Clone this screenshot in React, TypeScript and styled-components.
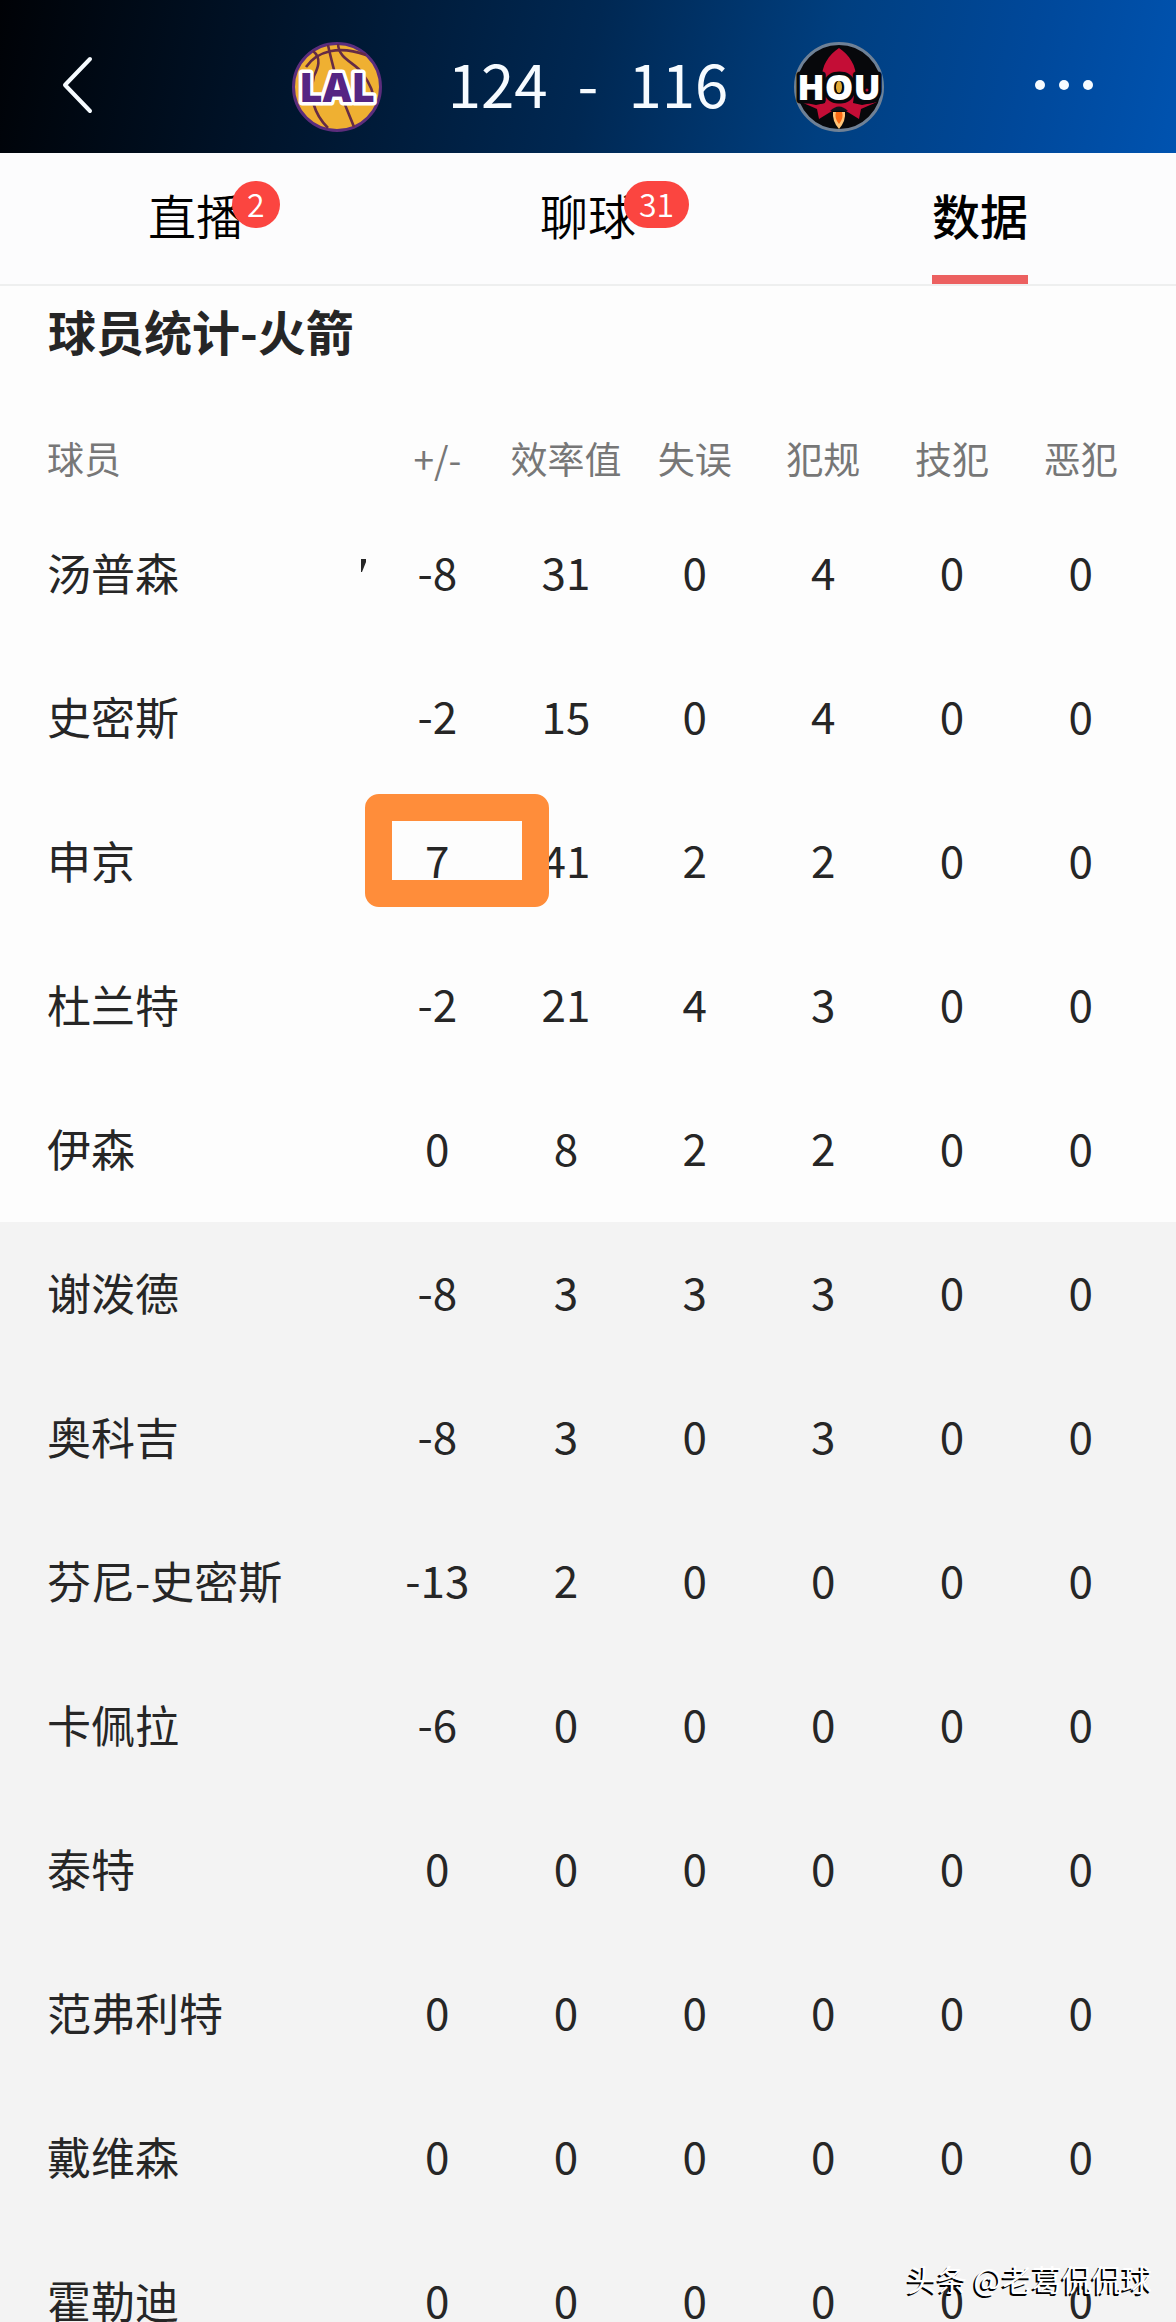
import React from "react";
import styled, { createGlobalStyle } from "styled-components";

const GlobalStyle = createGlobalStyle`
  * { box-sizing: border-box; }
  body {
    margin: 0;
    font-family: "Noto Sans CJK SC", "Noto Sans", sans-serif;
    color: #262626;
    background: #f3f3f3;
  }
`;

const Page = styled.div`
  position: relative;
  display: flex;
  flex-direction: column;
  height: 100vh;
  overflow: hidden;
`;

const Header = styled.header`
  flex: none;
  display: grid;
  grid-template-columns: 1fr 592px 1fr;
  align-items: center;
  height: 153px;
  padding: 20px 48px 0;
  color: #f6fbff;
  background: linear-gradient(102deg, #000206 0%, #00142b 24%, #002853 50%, #003f80 70%, #00489a 86%, #0053b0 100%);
`;

const IconButton = styled.button<{ $end?: boolean }>`
  display: flex;
  justify-self: ${(p) => (p.$end ? "end" : "start")};
  padding: 8px 8px 12px;
  border: 0;
  color: inherit;
  background: none;
  cursor: pointer;
`;

const Matchup = styled.div`
  display: flex;
  align-items: center;
  justify-content: space-between;
`;

const Score = styled.div`
  display: flex;
  gap: 30px;
  padding-bottom: 10px;
  font-size: 60px;
  line-height: 64px;
`;

const Tabs = styled.nav`
  flex: none;
  display: grid;
  grid-template-columns: repeat(3, 1fr);
  justify-items: center;
  height: 133px;
  border-bottom: 2px solid #eeefef;
  background: #fcfcfd;
`;

const Tab = styled.button<{ $active?: boolean }>`
  position: relative;
  padding: 0;
  border: 0;
  border-bottom: 9px solid ${(p) => (p.$active ? "#ec6060" : "transparent")};
  font-family: inherit;
  font-size: 48px;
  line-height: 64px;
  font-weight: ${(p) => (p.$active ? 500 : 350)};
  color: #000;
  background: none;
  cursor: pointer;
`;

const Badge = styled.span`
  position: absolute;
  top: 28px;
  left: calc(50% + 36px);
  min-width: 47px;
  padding: 0 15px;
  border-radius: 24px;
  font-size: 32px;
  line-height: 45px;
  padding-bottom: 2px;
  font-weight: 350;
  color: #fff;
  background: #fb4540;
`;

const Content = styled.main`
  flex: 1;
  min-height: 0;
  overflow: hidden;
  background: #f3f3f3;
`;

const Title = styled.h2`
  margin: 0;
  padding: 0 48px 43px;
  font-size: 48px;
  line-height: 88px;
  font-weight: 700;
  background: #fdfdfd;
`;

const Table = styled.table`
  display: block;
  thead, tbody { display: block; }
`;

const Row = styled.tr<{ $bench?: boolean }>`
  display: grid;
  grid-template-columns: 341px repeat(6, 1fr);
  align-items: center;
  height: 144px;
  padding: 0 31px 4px 32px;
  background: ${(p) => (p.$bench ? "#f3f3f3" : "#fdfdfd")};
`;

const HeadRow = styled(Row)`
  height: 85px;
`;

const HeadCell = styled.th<{ $name?: boolean }>`
  padding: ${(p) => (p.$name ? "0 15px" : "0")};
  font-size: 37px;
  line-height: 48px;
  font-weight: 400;
  text-align: ${(p) => (p.$name ? "left" : "center")};
  white-space: nowrap;
  color: #777;
`;

const NameCell = styled.th`
  position: relative;
  padding: 0 15px;
  font-size: 44px;
  line-height: 64px;
  font-weight: 400;
  text-align: left;
  white-space: nowrap;
`;

const Stat = styled.td`
  position: relative;
  padding: 0 0 2px;
  font-size: 44px;
  line-height: 64px;
  text-align: center;
`;

const Highlight = styled.span`
  position: absolute;
  z-index: 1;
  top: -33px;
  left: -8px;
  width: 184px;
  height: 113px;
  border: 27px solid #ff8d3a;
  border-radius: 14px;
`;

const Stray = styled.svg`
  position: absolute;
  top: 19px;
  right: 7px;
`;

const Watermark = styled.div`
  position: absolute;
  z-index: 2;
  right: 24px;
  bottom: 24px;
  font-size: 30px;
  line-height: 40px;
  color: #fff;
  text-shadow: -2px 2px 0 #000;
`;

const columns = ["+/-", "效率值", "失误", "犯规", "技犯", "恶犯"];

type Player = { name: string; stats: number[]; marked?: boolean; stray?: boolean };

const starters: Player[] = [
  { name: "汤普森", stats: [-8, 31, 0, 4, 0, 0], stray: true },
  { name: "史密斯", stats: [-2, 15, 0, 4, 0, 0] },
  { name: "申京", stats: [7, 41, 2, 2, 0, 0], marked: true },
  { name: "杜兰特", stats: [-2, 21, 4, 3, 0, 0] },
  { name: "伊森", stats: [0, 8, 2, 2, 0, 0] },
];

const bench: Player[] = [
  { name: "谢泼德", stats: [-8, 3, 3, 3, 0, 0] },
  { name: "奥科吉", stats: [-8, 3, 0, 3, 0, 0] },
  { name: "芬尼-史密斯", stats: [-13, 2, 0, 0, 0, 0] },
  { name: "卡佩拉", stats: [-6, 0, 0, 0, 0, 0] },
  { name: "泰特", stats: [0, 0, 0, 0, 0, 0] },
  { name: "范弗利特", stats: [0, 0, 0, 0, 0, 0] },
  { name: "戴维森", stats: [0, 0, 0, 0, 0, 0] },
  { name: "霍勒迪", stats: [0, 0, 0, 0, 0, 0] },
];

const logoText = {
  textAnchor: "middle" as const,
  fontFamily: '"Open Sans", "Noto Sans", sans-serif',
  fontWeight: 800,
  strokeLinejoin: "round" as const,
  paintOrder: "stroke" as const,
};

function LakersLogo() {
  return (
    <svg width="90" height="90" viewBox="0 0 90 90" overflow="visible" role="img" aria-label="LAL">
      <circle cx="45" cy="45" r="43.5" fill="#efb032" stroke="#5b2d7c" strokeWidth="3" />
      <g fill="none" stroke="#652b45" strokeWidth="2.6">
        <path d="M14 25C25 9 47 3 74 13" />
        <path d="M21 9C30 16 26 26 22 34C17 54 22 72 36 86" />
        <path d="M36 3C39 17 42 27 45 40C50 57 57 72 62 85" />
        <path d="M46 2C47 18 63 20 71 32C78 42 82 50 82 59" />
      </g>
      <text x="45" y="60" fontSize="40" fill="#552583" stroke="#fff" strokeWidth="7" {...logoText}>LAL</text>
    </svg>
  );
}

function RocketsLogo() {
  return (
    <svg width="90" height="90" viewBox="0 0 90 90" overflow="visible" role="img" aria-label="HOU">
      <circle cx="45" cy="45" r="43.5" fill="#07080b" stroke="#6f8196" strokeWidth="3" />
      <path d="M45 6C35 13 27 23 28 39L31 61L22 63L7 60L23 67L25 77L38 69H52L65 77L67 67L83 60L68 63L59 61L62 39C63 23 55 13 45 6Z" fill="#c40d36" />
      <path d="M36 69Q45 60 54 69Z" fill="#10131b" />
      <path d="M39 70H51Q52 79 45 87Q38 79 39 70Z" fill="#ffc477" />
      <path d="M42 70H48Q50 76 45 82Q40 76 42 70Z" fill="#fa6a14" />
      <text x="45" y="58" fontSize="36" fill="#fff" stroke="#07080b" strokeWidth="7" {...logoText}>HOU</text>
      <ellipse cx="45" cy="45" rx="3" ry="6" fill="#e2aa35" />
      <circle cx="73" cy="48" r="1.5" fill="#c40d36" />
    </svg>
  );
}

function PlayerRow({ player, isBench }: { player: Player; isBench?: boolean }) {
  return (
    <Row $bench={isBench}>
      <NameCell scope="row">
        {player.name}
        {player.stray && (
          <Stray width="5" height="13" viewBox="0 0 5 13" aria-hidden="true">
            <path d="M0 0H5V3L1 13H0Z" fill="#262626" />
          </Stray>
        )}
      </NameCell>
      {player.stats.map((value, i) => (
        <Stat key={columns[i]}>
          {value}
          {player.marked && i === 0 && <Highlight />}
        </Stat>
      ))}
    </Row>
  );
}

export default function App() {
  return (
    <Page>
      <GlobalStyle />
      <Header>
        <IconButton aria-label="返回">
          <svg width="42" height="58" viewBox="0 0 42 58" fill="none" stroke="currentColor" strokeWidth="4" strokeLinecap="round" strokeLinejoin="round">
            <path d="M34 3L9 29L34 55" />
          </svg>
        </IconButton>
        <Matchup>
          <LakersLogo />
          <Score>
            <span>124</span>
            <span>-</span>
            <span>116</span>
          </Score>
          <RocketsLogo />
        </Matchup>
        <IconButton $end aria-label="更多">
          <svg width="88" height="12" viewBox="0 0 88 12" fill="currentColor">
            <circle cx="8" cy="6" r="5" />
            <circle cx="32" cy="6" r="5" />
            <circle cx="56" cy="6" r="5" />
          </svg>
        </IconButton>
      </Header>
      <Tabs>
        <Tab>直播<Badge>2</Badge></Tab>
        <Tab>聊球<Badge>31</Badge></Tab>
        <Tab $active aria-current="page">数据</Tab>
      </Tabs>
      <Content>
        <Title>球员统计-火箭</Title>
        <Table>
          <thead>
            <HeadRow>
              <HeadCell $name scope="col">球员</HeadCell>
              {columns.map((c) => (
                <HeadCell key={c} scope="col">{c}</HeadCell>
              ))}
            </HeadRow>
          </thead>
          <tbody>
            {starters.map((p) => <PlayerRow key={p.name} player={p} />)}
            {bench.map((p) => <PlayerRow key={p.name} player={p} isBench />)}
          </tbody>
        </Table>
      </Content>
      <Watermark>头条 @老葛侃侃球</Watermark>
    </Page>
  );
}
